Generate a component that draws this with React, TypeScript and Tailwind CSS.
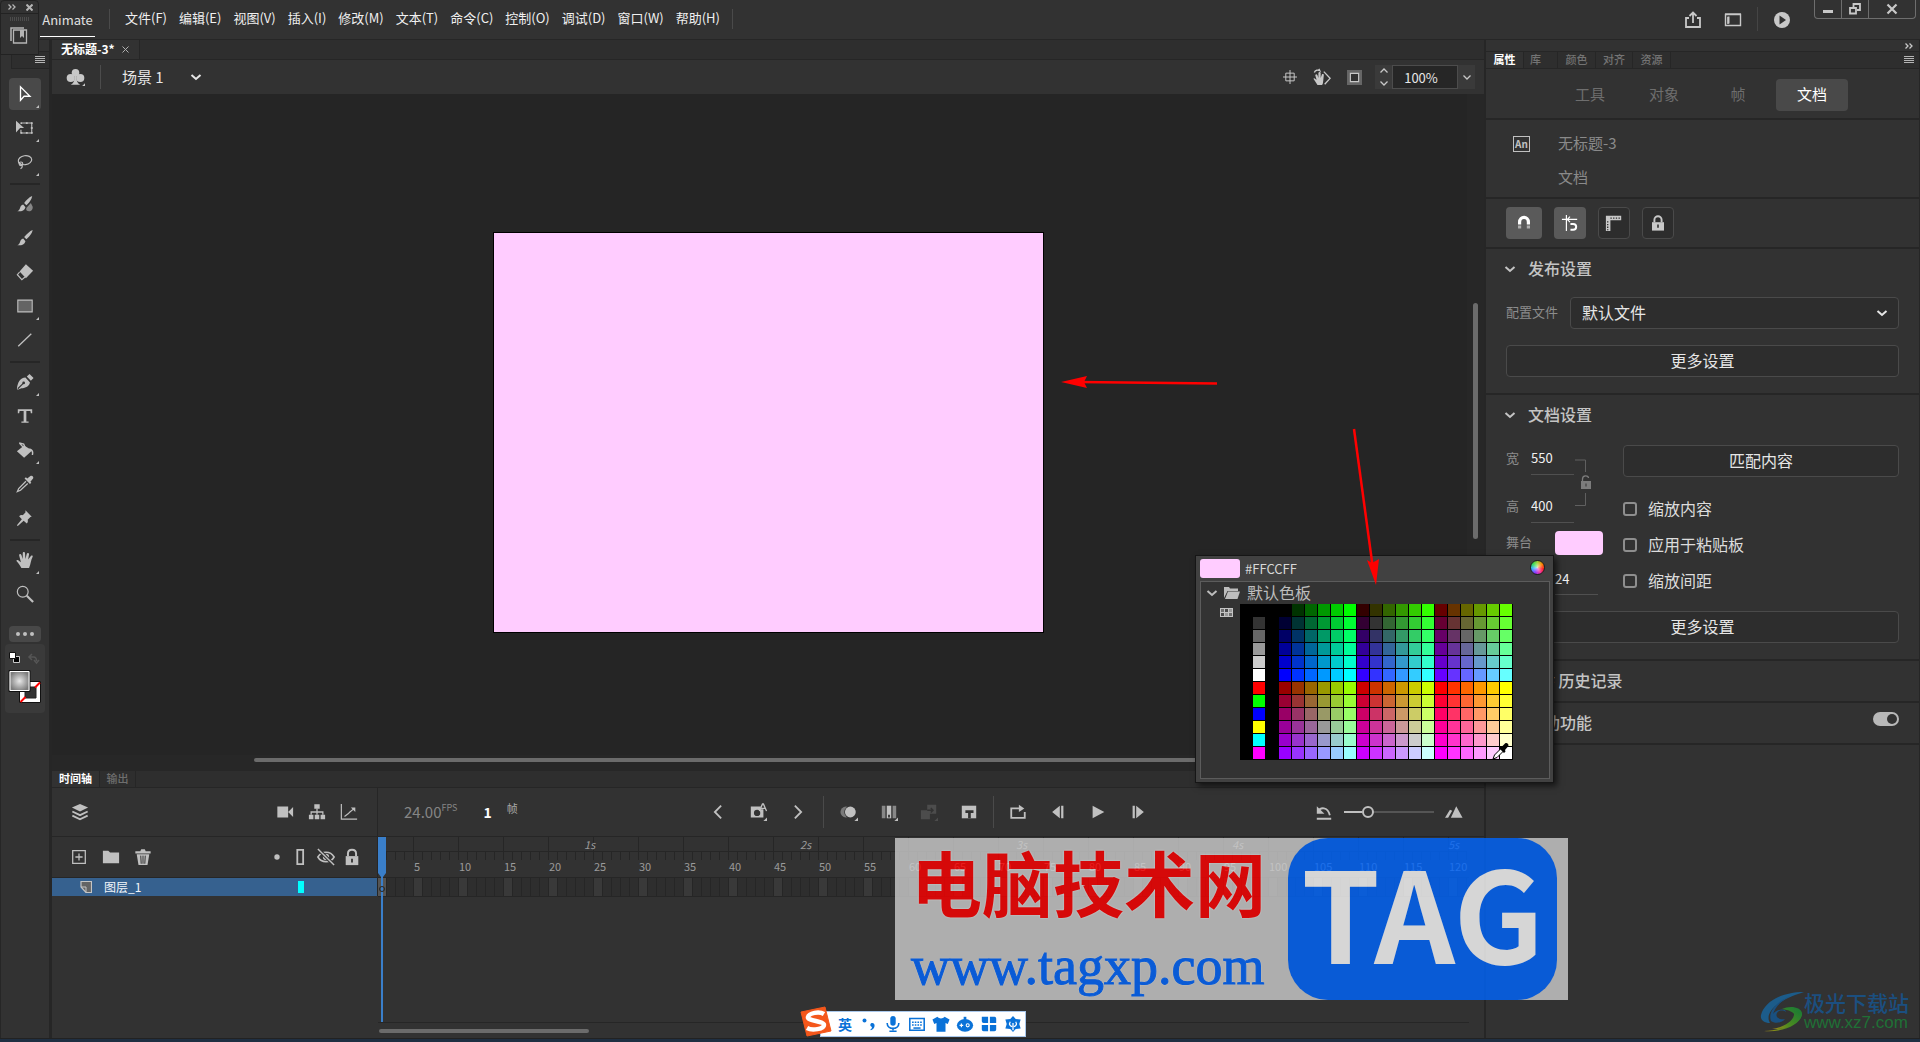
import React, { useState } from 'react'

type IconProps = {
  children: React.ReactNode
  className?: string
  box?: string
}

const Icon: React.FC<IconProps> = ({ children, className = 'w-5 h-5', box = '0 0 20 20' }) => (
  <svg viewBox={box} className={`${className} shrink-0`} fill="currentColor" aria-hidden="true">
    {children}
  </svg>
)

const stroke = { fill: 'none', stroke: 'currentColor' }

const Chevron: React.FC<{ className?: string }> = ({ className = 'w-3 h-3' }) => (
  <Icon box="0 0 12 12" className={className}>
    <path d="M1.500 4l4.500 4 4.500-4" {...stroke} strokeWidth="2" />
  </Icon>
)

const Burger: React.FC = () => (
  <Icon box="0 0 10 8" className="w-[10px] h-2">
    <path d="M0 .5h10M0 2.500h10M0 4.500h10M0 6.500h10" {...stroke} />
  </Icon>
)

const menus = ['文件(F)', '编辑(E)', '视图(V)', '插入(I)', '修改(M)', '文本(T)', '命令(C)', '控制(O)', '调试(D)', '窗口(W)', '帮助(H)']

const TopBar: React.FC = () => (
  <header className="flex h-10 shrink-0 items-start border-b border-[#262626] bg-[#323232] pl-10">
    <button className="mt-2 h-[29px] w-[55px] border-b border-white pb-1 text-[13px] text-[#e0e0e0]">Animate</button>
    <span className="mt-[9px] ml-[14px] h-5 w-px bg-[#4a4a4a]" />
    <nav className="flex gap-3 pt-[9px] pl-[15px] text-[13px] leading-[18px] whitespace-nowrap text-[#f0f0f0]">
      {menus.map((m) => (
        <button key={m}>{m}</button>
      ))}
    </nav>
    <span className="mt-[9px] ml-[12px] h-5 w-px bg-[#4a4a4a]" />
    <div className="ml-auto flex text-[#c8c8c8]">
      <button className="mt-2 flex h-6 w-10 items-center justify-center" aria-label="共享">
        <Icon>
          <path d="M6 8H3v9h14V8h-3M10 13V3M6.500 6L10 2.500 13.500 6" {...stroke} strokeWidth="1.800" />
        </Icon>
      </button>
      <button className="mt-2 flex h-6 w-10 items-center justify-center" aria-label="工作区">
        <Icon>
          <path d="M2.500 4.500h15v11h-15zM2 4h16M5 7v7" {...stroke} strokeWidth="1.400" />
          <path d="M4.500 6.500h2v7h-2z" />
        </Icon>
      </button>
      <span className="mx-1 mt-[7px] h-6 w-px bg-[#454545]" />
      <button className="mt-2 flex h-6 w-10 items-center justify-center" aria-label="测试影片">
        <Icon>
          <circle cx="10" cy="10" r="8" />
          <path d="M7.500 5.500l6.500 4.500-6.500 4.500z" fill="#323232" />
        </Icon>
      </button>
      <div className="mr-1 ml-3 flex h-[19px] rounded-b border border-t-0 border-[#6e6e6e]">
        <button className="flex w-[27px] items-center justify-center border-r border-[#6e6e6e]" aria-label="最小化">
          <Icon box="0 0 12 12" className="h-3 w-3"><path d="M1 7h10v3H1z" /></Icon>
        </button>
        <button className="flex w-[27px] items-center justify-center border-r border-[#6e6e6e]" aria-label="还原">
          <Icon box="0 0 12 12" className="h-3 w-3"><path d="M4.500 4V1h6.500v6H8M1 5h6v5.500H1z" {...stroke} strokeWidth="1.800" /></Icon>
        </button>
        <button className="flex w-[46px] items-center justify-center" aria-label="关闭">
          <Icon box="0 0 12 12" className="h-3 w-3"><path d="M1.500 1.500l9 9M10.500 1.500l-9 9" {...stroke} strokeWidth="2.200" /></Icon>
        </button>
      </div>
    </div>
  </header>
)

type Tool = { name: string; more?: boolean; art: React.ReactNode }

const toolGroups: Tool[][] = [
  [
    { name: '选择工具', more: true, art: <path d="M5 2v15l4-4.500h6.500z" {...stroke} strokeWidth="1.500" stroke="#fff" /> },
    {
      name: '任意变形工具',
      more: true,
      art: (
        <>
          <path d="M0 2l9 8H4.500L0 15z" />
          <path d="M7 4.500h10.500v11H5.500V12" {...stroke} strokeWidth="1.200" />
          <path d="M5 3.500h2v2H5zM11 3.500h2v2h-2zM16.500 3.500h2v2h-2zM16.500 9h2v2h-2zM16.500 14.500h2v2h-2zM11 14.500h2v2h-2zM5 14.500h2v2H5z" />
        </>
      ),
    },
    {
      name: '套索工具',
      more: true,
      art: (
        <g {...stroke} strokeWidth="1.300">
          <ellipse cx="10" cy="8" rx="7.500" ry="5" transform="rotate(-8 10 8)" />
          <circle cx="5.500" cy="12" r="2" />
          <path d="M3 10c0 3 4 2 4 4.500 0 1.500-1 2.500-2 3" />
        </g>
      ),
    },
  ],
  [
    {
      name: '流畅画笔工具',
      art: (
        <>
          <path d="M18 1c-3 1-7 5-9 8l2.500 2.500C14 9 17.500 5 18 1zM8 10.500c-2 .5-3 2-3.500 4-.5 1.500-1.500 3-3 3.500 4 .5 8-.5 9-4.500z" />
          <path d="M16.500 9l2 4c.5 3-1.500 5-4 5s-3.500-1-3-3.500z" opacity=".6" />
        </>
      ),
    },
    { name: '传统画笔工具', art: <path d="M18.500 1c-3 1-7 5-9.500 8l2.500 2.500C14 9 18 5 18.500 1zM8 10.500c-2 .5-3 2-3.500 4-.5 1.500-1.500 3-3 3.500 4 .5 8-.5 9-4.500z" /> },
    {
      name: '橡皮擦工具',
      art: (
        <>
          <path d="M11 1.500l8 7-8 8.500L4 9.500z" />
          <path d="M4 10L1.500 13l5 5.500 3.500-3" {...stroke} strokeWidth="1.300" />
        </>
      ),
    },
    { name: '矩形工具', more: true, art: <path d="M2 3.500h16v13H2z" fill="#646464" stroke="currentColor" strokeWidth="1.200" /> },
    { name: '线条工具', art: <path d="M2.500 17L17 3" {...stroke} strokeWidth="1.400" /> },
  ],
  [
    {
      name: '钢笔工具',
      more: true,
      art: (
        <>
          <path d="M10.500 5L15.500 10.500C14.500 15 11 16.500 6 17l-4 1.500L1 17.500C2 10 4.500 5.500 10.500 5zM12 4l3-3 4.500 4.500-3 3z" />
          <path d="M2 17.500l6-6" stroke="#323232" strokeWidth="1.200" />
          <circle cx="8.500" cy="11" r="1.500" fill="#323232" />
        </>
      ),
    },
    { name: '文本工具', art: <path d="M2 2.500h16v4.500h-1.500L16 4.500h-4.500v11.500H14v1.500H6V16h2.500V4.500H4L3.500 7H2z" /> },
    {
      name: '颜料桶工具',
      more: true,
      art: (
        <>
          <path d="M9 5l9 5.500L9 18.500l-8-7zM15 8c4 1 5 4 4 7.500h-1.500c.5-3 0-5-2.500-6z" />
          <path d="M4 2.500l6 6.500M3.500 2l5 1.500L10 7" {...stroke} strokeWidth="1.500" />
        </>
      ),
    },
    {
      name: '滴管工具',
      art: (
        <>
          <path d="M12.500 4l3.500-3c2-1 4 1 3 3l-3 3.500 1 1-1.500 1.500-6-6 1.500-1.500z" />
          <path d="M11 7l-8 8-1.500 3.500 3.500-1.500L13 9.500" {...stroke} strokeWidth="1.400" />
        </>
      ),
    },
    { name: '资源变形工具', art: <path d="M10.500 1.500l7 7-1.500.5-3 3c.5 2 0 3-1 4L8.500 13 2 19l-1-1 5.500-6.500L3.500 8c1-1 2.500-1.500 4-1l3-3z" /> },
  ],
  [
    {
      name: '手形工具',
      more: true,
      art: <path d="M6 19C4.500 16 3 13.500.5 11c0-1.500 2-1.500 3 0L5.500 12.500 3.500 5C3.500 3 5.500 3 6 4.500L7.500 9V2.500c0-2 2.500-2 2.500 0l.5 6.500L12 3c.5-1.500 2.500-1 2.500.5L13.500 9.500 16.500 5.500c1-1 2.500-.5 2 1-2 3.500-2 8-4 12.500z" />,
    },
    {
      name: '缩放工具',
      art: (
        <g {...stroke}>
          <circle cx="7.500" cy="7.500" r="6" strokeWidth="1.300" />
          <path d="M12 12l7 7" strokeWidth="2.400" />
        </g>
      ),
    },
  ],
]

const Toolbar: React.FC = () => {
  const [tool, setTool] = useState('选择工具')
  return (
    <aside className="w-[49px] shrink-0 border-l border-[#262626] bg-[#323232]">
      <div className="h-3 border-b border-[#262626]" />
      <div className="mb-[9px] ml-[10px] flex h-[17px] items-center justify-end border-b border-l border-[#262626] bg-[#2e2e2e] pr-1 text-[#b5b5b5]">
        <Burger />
      </div>
      {toolGroups.map((group, i) => (
        <div key={i}>
          {i > 0 && <div className="mx-auto mt-[5px] mb-[3px] h-[2px] w-[30px] bg-[#262626]" />}
          {group.map((t) => (
            <button
              key={t.name}
              aria-label={t.name}
              onClick={() => setTool(t.name)}
              className={`relative mx-auto mb-[2px] flex h-8 w-8 items-center justify-center rounded text-[#c0c0c0] ${tool === t.name ? 'bg-[#494949]' : ''}`}
            >
              <Icon className="h-[18px] w-[18px]">{t.art}</Icon>
              {t.more && (
                <Icon box="0 0 4 4" className="absolute right-[2px] bottom-[2px] h-[3px] w-[3px]">
                  <path d="M4 0v4H0z" />
                </Icon>
              )}
            </button>
          ))}
        </div>
      ))}
      <button aria-label="编辑工具栏" className="mx-auto mt-4 flex h-4 w-8 items-center justify-center gap-[3px] rounded bg-[#484848]">
        <span className="h-1 w-1 rounded-full bg-[#c0c0c0]" />
        <span className="h-1 w-1 rounded-full bg-[#c0c0c0]" />
        <span className="h-1 w-1 rounded-full bg-[#c0c0c0]" />
      </button>
      <div className="mx-auto mt-[2px] h-[69px] w-10 rounded bg-[#3a3a3a]">
        <svg viewBox="0 0 40 69" className="h-[69px] w-10" aria-hidden="true">
          <defs>
            <radialGradient id="fillball">
              <stop offset="0" stopColor="#e8e8e8" />
              <stop offset="1" stopColor="#7c7c7c" />
            </radialGradient>
          </defs>
          <path d="M8.500 12.500h6v6h-6z" fill="#000" stroke="#c8c8c8" />
          <path d="M4.500 8.500h6v6h-6z" fill="#fff" stroke="#111" />
          <path d="M27 10l-3 3 3 3M24.500 13h4c2 0 3 1 3 4M29 16l2.500 3 2.500-3" fill="none" stroke="#555" strokeWidth="1.500" />
          <path d="M14.500 37.500h21v21h-21z" fill="#fff" stroke="#111" />
          <path d="M20 43h11v11H20z" fill="#323232" stroke="#222" />
          <path d="M15.500 58l5-5M30 43.500l5-5" stroke="#f00" strokeWidth="2" />
          <path d="M4 26.500h21v21H4z" fill="url(#fillball)" stroke="#111" />
          <path d="M5 27.500h19v19H5z" fill="none" stroke="#fff" />
        </svg>
      </div>
    </aside>
  )
}

const SceneBar: React.FC = () => (
  <div className="flex h-[34px] shrink-0 items-center bg-[#323232] text-[#c8c8c8]">
    <button className="ml-[14px] flex w-5" aria-label="编辑元件">
      <Icon className="h-[19px] w-[19px]">
        <circle cx="10" cy="5" r="4" />
        <circle cx="5" cy="10.500" r="4.300" />
        <circle cx="15" cy="10.500" r="4.300" />
        <path d="M9 8h2c0 5 .5 8 4 9.500H5C8.500 16 9 13 9 8zM20 16v3h-3z" />
      </Icon>
    </button>
    <span className="ml-[14px] h-6 w-px bg-[#4c4c4c]" />
    <button className="ml-[21px] flex items-center text-[15px] leading-5 text-[#e6e6e6]">
      场景 1
      <span className="ml-[26px]"><Chevron /></span>
    </button>
    <div className="mr-[9px] ml-auto flex items-center">
      <button className="flex w-8 justify-center" aria-label="舞台居中">
        <Icon className="h-[14px] w-[14px]"><path d="M10 0v20M0 10h20M4 4.500h12v11H4z" {...stroke} strokeWidth="1.400" /></Icon>
      </button>
      <button className="flex w-8 justify-center" aria-label="旋转工具">
        <Icon className="h-[18px] w-[18px]">
          <path d="M5 19L.5 12c0-1 1.500-1 2.500.5L4 13 2.500 8c.5-1.500 2-1 2.500 0l1 3V5.500c.5-1.500 2.500-1 2.500 0V11l1.500-4c1-1 2.500 0 2 1l-.5 5c-.5 3 0 4-1.500 6z" />
          <path d="M1.500 5c1-3 4-3 6-2L6.500 1M12 4l7 7.500-6 6.500" {...stroke} strokeWidth="1.500" />
        </Icon>
      </button>
      <button className="flex w-8 justify-center" aria-label="剪切掉舞台范围以外的内容">
        <Icon className="h-[15px] w-[15px]">
          <path d="M0 0h20v20H0z" opacity=".35" />
          <path d="M4.500 4.500h11v11h-11z" fill="#323232" stroke="currentColor" strokeWidth="1.500" />
        </Icon>
      </button>
      <div className="ml-[5px] flex h-6 w-[17px] flex-col items-center justify-between bg-[#3a3a3a] py-[3px]">
        <Icon box="0 0 8 5" className="h-[5px] w-2"><path d="M.5 4.500L4 1l3.500 3.500" {...stroke} strokeWidth="1.300" /></Icon>
        <Icon box="0 0 8 5" className="h-[5px] w-2"><path d="M.5 .5L4 4 7.500.5" {...stroke} strokeWidth="1.300" /></Icon>
      </div>
      <input aria-label="缩放比例" defaultValue="100%" className="h-6 w-[66px] border border-[#4c4c4c] bg-[#262626] pr-2 text-center text-[13px] text-[#e6e6e6]" />
      <button aria-label="缩放列表" className="flex h-6 w-[17px] items-center justify-center bg-[#3a3a3a]">
        <Icon box="0 0 8 5" className="h-[5px] w-2"><path d="M.5 .5L4 4 7.500.5" {...stroke} strokeWidth="1.300" /></Icon>
      </button>
    </div>
  </div>
)

const CanvasArea: React.FC = () => (
  <div className="relative flex flex-1 items-center justify-center bg-[#252525]">
    <div className="h-[401px] w-[551px] border border-black bg-[#ffccff]" />
    <div className="absolute top-0 right-0 h-full w-[17px] bg-[#272727]">
      <div className="mt-[209px] ml-[6px] h-[236px] w-[5px] rounded-full bg-[#6b6b6b]" />
    </div>
    <div className="absolute bottom-0 left-0 h-4 w-full bg-[#272727]">
      <div className="mt-[3px] ml-[202px] h-1 w-[1020px] rounded-full bg-[#6b6b6b]" />
    </div>
  </div>
)

const IconButton: React.FC<{ label: string; width?: string; children: React.ReactNode }> = ({ label, width = 'w-8', children }) => (
  <button aria-label={label} className={`flex ${width} shrink-0 justify-center`}>
    <Icon className="h-[18px] w-[18px]">{children}</Icon>
  </button>
)

const frames = Array.from({ length: 121 }, (_, i) => i + 1)
const corner = <path d="M20 16v4h-4z" />

const Timeline: React.FC = () => (
  <section className="h-[267px] shrink-0 bg-[#323232] text-[#c0c0c0]">
    <div className="flex h-[17px] border-b border-[#262626] bg-[#2e2e2e] text-[11px] leading-[14px] font-bold">
      <button className="w-12 border-r border-[#262626] bg-[#323232] pb-[2px] text-white">时间轴</button>
      <button className="w-9 border-r border-[#262626] pb-[2px] font-medium text-[#6e6e6e]">输出</button>
    </div>
    <div className="flex h-[49px] items-center border-b border-[#262626]">
      <div className="flex h-full w-[326px] shrink-0 items-center border-r border-[#262626] pr-3 pl-3">
        <IconButton label="图层深度">
          <path d="M10 1l9 4-9 4.500L1 5z" />
          <path d="M1.500 9.500L10 13.500l8.500-4M1.500 14L10 18l8.500-4" {...stroke} strokeWidth="2" />
        </IconButton>
        <span className="flex-1" />
        <IconButton label="摄像头"><path d="M1.500 4h12v12h-12zM13.500 10L19 4.500v11z" /></IconButton>
        <IconButton label="父级视图">
          <path d="M7 1.500h6v5H7zM1 13h5v5H1zM7.500 13h5v5h-5zM14 13h5v5h-5z" />
          <path d="M10 6v7M3.500 13v-3h13v3" {...stroke} strokeWidth="1.400" />
        </IconButton>
        <IconButton label="图表">
          <path d="M1.500 1v17H19M5 15l4-3 2-2 5-4" {...stroke} strokeWidth="1.300" />
          <path d="M12 5h5v5z" />
        </IconButton>
      </div>
      <div className="flex w-[320px] shrink-0 pl-[26px]">
        <span className="text-[15px] leading-5 text-[#858585]">24.00</span>
        <span className="text-[9px] leading-3 text-[#858585]">FPS</span>
        <span className="ml-[26px] text-[14px] leading-5 font-bold text-white">1</span>
        <span className="ml-[15px] text-[11px] leading-3 text-[#a8a8a8]">帧</span>
      </div>
      <IconButton label="上一关键帧" width="w-10"><path d="M13.500 3L6.500 10l7 7" {...stroke} strokeWidth="2" /></IconButton>
      <IconButton label="插入关键帧" width="w-10">
        <path d="M2 4h11v3h3v9H2z" />
        <circle cx="9" cy="11" r="3.500" fill="#323232" />
        <path d="M11.500 9l3.500-8h1l3.500 8M13.500 6h4" {...stroke} strokeWidth="1.500" />
        {corner}
      </IconButton>
      <IconButton label="下一关键帧" width="w-10"><path d="M6.500 3l7 7-7 7" {...stroke} strokeWidth="2" /></IconButton>
      <span className="mx-[5px] h-8 w-px bg-[#4a4a4a]" />
      <IconButton label="绘图纸外观" width="w-10">
        <circle cx="6.500" cy="10" r="6" opacity=".5" />
        <circle cx="11.500" cy="10" r="6.800" fill="#323232" />
        <circle cx="11.500" cy="10" r="6" />
        {corner}
      </IconButton>
      <IconButton label="编辑多个帧" width="w-10">
        <path d="M2 3h4v14H2zM14 3h4v14h-4z" opacity=".6" />
        <path d="M7.500 3h5v14h-5z" />
        <path d="M9 13h2v3H9z" fill="#323232" />
        {corner}
      </IconButton>
      <IconButton label="创建补间" width="w-10">
        <path d="M8 2h10v10H8zM1 8h10v10H1z" fill="#4c4c4c" />
        <path d="M8 8h6M12 5.500L14.500 8 12 10.500" fill="none" stroke="#323232" strokeWidth="1.500" />
        <path d="M20 16v4h-4z" fill="#4c4c4c" />
      </IconButton>
      <IconButton label="粘贴帧" width="w-10">
        <path d="M2 3h16v14H2z" />
        <path d="M6 8h9v3h-3v6H9v-6H6z" fill="#323232" />
      </IconButton>
      <span className="mx-1 h-8 w-px bg-[#4a4a4a]" />
      <IconButton label="循环" width="w-10">
        <path d="M9 6H2.500v10.500h15V10M8 6h5" {...stroke} strokeWidth="2" />
        <path d="M11 2l6 4-6 4z" />
      </IconButton>
      <IconButton label="后退一帧" width="w-10"><path d="M12 3v14L3.500 10zM13.500 3H16v14h-2.500z" /></IconButton>
      <IconButton label="播放" width="w-10"><path d="M4 3l13 7-13 7z" /></IconButton>
      <IconButton label="前进一帧" width="w-10"><path d="M4 3h2.500v14H4zM8 3v14l8.500-7z" /></IconButton>
      <div className="mr-[14px] ml-auto flex items-center">
        <IconButton label="重置时间轴缩放">
          <path d="M2 17.500h16M3 10c3-6 11-6 13.500 3.500" {...stroke} strokeWidth="2" />
          <path d="M2 3.500v8.500h8.500z" />
        </IconButton>
        <input
          type="range"
          aria-label="时间轴缩放"
          defaultValue="23"
          className="mx-1 h-[2px] w-[90px] appearance-none bg-linear-to-r from-[#c0c0c0] from-20% to-[#555] to-20% [&::-webkit-slider-thumb]:h-3 [&::-webkit-slider-thumb]:w-3 [&::-webkit-slider-thumb]:appearance-none [&::-webkit-slider-thumb]:rounded-full [&::-webkit-slider-thumb]:border-2 [&::-webkit-slider-thumb]:border-[#c0c0c0] [&::-webkit-slider-thumb]:bg-[#323232]"
        />
        <IconButton label="放大"><path d="M6.500 16.500l6-13 7 13zM0 16.500l5.500-9 2.500 1-4.500 8z" /></IconButton>
      </div>
    </div>
    <div className="flex h-[201px]">
      <div className="w-[326px] shrink-0">
        <div className="flex h-[41px] items-center border-r border-b border-[#262626] pr-3 pl-[11px]">
          <IconButton label="新建图层"><path d="M3 3h14v14H3zM10 6v8M6 10h8" {...stroke} strokeWidth="1.400" /></IconButton>
          <IconButton label="新建文件夹"><path d="M1 3h6l2 2h10v12H1z" /></IconButton>
          <IconButton label="删除">
            <path d="M1.500 3.500H7l1-2h4l1 2h5.500V6h-17zM3 7h14l-2 12H5z" />
            <path d="M7.500 8.500l.5 9M10 8.500v9M12.500 8.500l-.5 9" stroke="#323232" strokeWidth="1.100" />
          </IconButton>
          <span className="flex-1" />
          <IconButton label="突出显示图层" width="w-[20px]"><circle cx="10" cy="10" r="3" /></IconButton>
          <IconButton label="显示轮廓" width="w-[26px]"><path d="M7 2h6.500v16H7z" {...stroke} strokeWidth="2" /></IconButton>
          <IconButton label="隐藏图层" width="w-[26px]">
            <path d="M1 10c4-7 14-7 18 0-4 7-14 7-18 0z" {...stroke} strokeWidth="1.800" />
            <circle cx="10" cy="10" r="3.500" />
            <path d="M1 1l17 17" stroke="#323232" strokeWidth="4" />
            <path d="M1 1l18 18" {...stroke} strokeWidth="1.600" />
          </IconButton>
          <IconButton label="锁定图层" width="w-[26px]">
            <path d="M3 9h14v10H3z" />
            <path d="M5.500 9V6c0-5.500 9-5.500 9 0v3" {...stroke} strokeWidth="2.200" />
            <path d="M9 12h2v4H9z" fill="#323232" />
          </IconButton>
        </div>
        <div className="flex h-[18px] items-center border-r border-[#262626] bg-[#36618f] pl-[28px] text-[12px] text-[#f2f6fa]">
          <Icon box="0 0 12 12" className="h-3 w-3">
            <path d="M1 .5h10.500v11H6L1 6z" fill="#646464" stroke="#c4c4c4" strokeWidth="1.200" />
            <path d="M1 6h5v5.500" {...stroke} stroke="#c4c4c4" />
          </Icon>
          <span className="ml-3">图层_1</span>
          <span className="mr-[73px] ml-auto h-3 w-[6px] bg-[#00ffff]" />
        </div>
      </div>
      <div className="relative mr-[15px] min-w-0 flex-1 overflow-hidden">
        <div className="flex h-[41px] border-b border-[#262626] text-[11px] text-[#9a9a9a]">
          {frames.map((n) => (
            <div key={n} className="relative w-[9px] shrink-0">
              <div className={`h-[15px] border-b border-[#262626] ${n % 5 === 4 ? 'border-r' : ''}`} />
              <div className="h-2 border-r border-[#262626]" />
              {n % 5 === 0 && <span className="absolute top-[21px] left-0 leading-4">{n}</span>}
              {n % 24 === 0 && <span className="absolute top-0 left-[-1px] leading-[14px] italic">{n / 24}s</span>}
            </div>
          ))}
        </div>
        <div className="flex h-[19px] border-b border-[#262626]">
          {frames.map((n) => (
            <div
              key={n}
              className={`w-[9px] shrink-0 border-r border-[#262626] ${n === 1 ? 'bg-[#555555]' : n % 5 === 0 ? 'bg-[#393939]' : 'bg-[#2e2e2e]'}`}
            />
          ))}
        </div>
        <svg viewBox="0 0 9 185" className="absolute top-0 left-0 h-[185px] w-[9px]" aria-hidden="true">
          <path d="M0 0h8v36l-3 4v145H3V40l-3-4z" fill="#3a7fca" />
          <circle cx="4" cy="52" r="2.500" fill="none" stroke="#262626" />
        </svg>
        <div className="absolute top-[185px] left-0 h-4 w-full border-t border-[#262626]">
          <div className="mt-[6px] ml-px h-1 w-[210px] rounded-full bg-[#6b6b6b]" />
        </div>
      </div>
    </div>
  </section>
)

const Section: React.FC<{ title: React.ReactNode; extra?: React.ReactNode; children?: React.ReactNode }> = ({ title, extra, children }) => (
  <section className="border-b-2 border-[#262626]">
    <h2 className="flex h-10 items-center pr-5 pl-[18px] font-medium text-[#c4c4c4]">
      <Chevron />
      <span className="ml-3 pb-[2px] text-[16px]">{title}</span>
      {extra}
    </h2>
    {children}
  </section>
)

const wideButton = 'h-8 w-full rounded border border-[#4a4a4a] bg-[#2d2d2d] pb-[2px] text-[16px] leading-6 text-[#e6e6e6]'

const SizeField: React.FC<{ id: string; label: string; value: string }> = ({ id, label, value }) => (
  <div className="flex h-12 items-start">
    <label htmlFor={id} className="w-[25px] text-[13px] leading-[26px] text-[#8c8c8c]">{label}</label>
    <input id={id} defaultValue={value} className="h-[30px] w-[43px] border-b border-[#505050] pb-1 text-[13px] text-[#f0f0f0]" />
  </div>
)

const Check: React.FC<{ label: string }> = ({ label }) => (
  <label className="flex h-9 items-center gap-[11px] text-[16px] text-[#dcdcdc]">
    <input type="checkbox" className="h-[14px] w-[14px] appearance-none rounded-[3px] border-2 border-[#8e8e8e] checked:bg-[#8e8e8e]" />
    <span className="pb-[2px]">{label}</span>
  </label>
)

const Properties: React.FC = () => {
  const [tab, setTab] = useState('文档')
  return (
    <aside className="w-[434px] shrink-0 border-r border-[#262626] bg-[#323232] text-[#c8c8c8]">
      <div className="flex h-3 items-center justify-end border-b border-[#262626] pr-[6px]">
        <Icon box="0 0 8 6" className="h-[6px] w-2"><path d="M.5.500L3 3 .5 5.500M4.500.5L7 3 4.500 5.500" {...stroke} strokeWidth="1.300" /></Icon>
      </div>
      <div className="flex h-[17px] items-stretch border-b border-[#262626] bg-[#2e2e2e] text-[11px] leading-[14px] font-medium text-[#747474]">
        <button className="w-[38px] border-r border-[#262626] bg-[#323232] pb-[2px] font-bold text-white">属性</button>
        <button className="w-[34px] border-r border-[#262626] pr-[10px] pb-[2px]">库</button>
        <button className="w-[38px] border-r border-[#262626] pb-[2px]">颜色</button>
        <button className="w-[37px] border-r border-[#262626] pb-[2px]">对齐</button>
        <button className="w-[38px] border-r border-[#262626] pb-[2px]">资源</button>
        <span className="mt-1 mr-[5px] ml-auto text-[#b5b5b5]"><Burger /></span>
      </div>
      <div className="flex h-[51px] items-center justify-end gap-[2px] border-b-2 border-[#262626] pt-[3px] pr-[71px]">
        {['工具', '对象', '帧', '文档'].map((t) => (
          <button
            key={t}
            onClick={() => setTab(t)}
            className={`h-8 w-[72px] rounded pb-[2px] text-[15px] ${tab === t ? 'bg-[#494949] text-white' : 'text-[#6e6e6e]'}`}
          >
            {t}
          </button>
        ))}
      </div>
      <div className="flex h-[79px] border-b-2 border-[#262626] pt-[6px] text-[15px] leading-[34px] text-[#8a8a8a]">
        <span className="mt-[10px] ml-[27px] flex h-4 w-[17px] items-center justify-center border border-[#c0c0c0] text-[10px] leading-3 font-bold text-[#c0c0c0]">An</span>
        <div className="ml-[28px]">
          <p>无标题-3</p>
          <p>文档</p>
        </div>
      </div>
      <div className="flex h-[50px] items-center gap-3 border-b-2 border-[#262626] pl-5">
        <button aria-label="贴紧至对象" className="flex h-8 w-9 items-center justify-center rounded bg-[#5a5a5a] text-white">
          <Icon className="h-4 w-4">
            <path d="M4.500 12V9c0-8 11-8 11 0v3" {...stroke} strokeWidth="4" />
            <path d="M2.500 13h4v4h-4zM13.500 13h4v4h-4z" opacity=".5" />
          </Icon>
        </button>
        <button aria-label="贴紧对齐" className="flex h-8 w-8 items-center justify-center rounded bg-[#5a5a5a] text-white">
          <Icon className="h-[18px] w-[18px]">
            <path d="M6 1v18M1 6h17M10 3L7 6l3 3" {...stroke} strokeWidth="1.300" />
            <path d="M10.500 11h3c4.500 0 4.500 6.500 0 6.500h-3" {...stroke} strokeWidth="2.200" />
          </Icon>
        </button>
        <button aria-label="标尺" className="flex h-8 w-8 items-center justify-center rounded border border-[#4a4a4a] bg-[#2d2d2d]">
          <Icon className="h-[18px] w-[18px]">
            <path d="M1 2h17v5H6v12H1z" />
            <path d="M6 4.500h11M3 8v10" {...stroke} stroke="#2d2d2d" strokeWidth="1.500" strokeDasharray="1.500 1.500" />
          </Icon>
        </button>
        <button aria-label="锁定辅助线" className="flex h-8 w-8 items-center justify-center rounded border border-[#4a4a4a] bg-[#2d2d2d]">
          <Icon className="h-4 w-4">
            <path d="M2.500 9h15v10.500h-15z" />
            <path d="M5.500 9V6c0-6 9-6 9 0v3" {...stroke} strokeWidth="2.400" />
            <path d="M9 12h2v4H9z" fill="#2d2d2d" />
          </Icon>
        </button>
      </div>
      <Section title="发布设置">
        <div className="px-5 pt-2 pb-4">
          <div className="mb-4 flex items-center">
            <label htmlFor="profile" className="w-16 pb-[2px] text-[13px] text-[#8c8c8c]">配置文件</label>
            <div className="relative flex-1">
              <select id="profile" className="h-8 w-full appearance-none rounded border border-[#4a4a4a] bg-[#2d2d2d] pb-[2px] pl-[11px] text-[16px] text-[#e6e6e6]">
                <option>默认文件</option>
              </select>
              <span className="pointer-events-none absolute top-[10px] right-[11px] text-[#e6e6e6]"><Chevron /></span>
            </div>
          </div>
          <button className={wideButton}>更多设置</button>
        </div>
      </Section>
      <Section title="文档设置">
        <div className="px-5 pt-[10px] pb-4">
          <div className="flex">
            <div className="relative w-[117px] shrink-0">
              <SizeField id="doc-width" label="宽" value="550" />
              <SizeField id="doc-height" label="高" value="400" />
              <svg viewBox="0 0 18 48" className="absolute top-[14px] left-[69px] h-12 w-[18px] text-[#7c7c7c]" aria-hidden="true">
                <path d="M0 1h10.500v12M0 46.500h10.500V34" fill="none" stroke="#606060" />
                <path d="M6 22h10v8H6z" fill="currentColor" />
                <path d="M7.500 22v-2c0-4 6-4 6-1" fill="none" stroke="currentColor" strokeWidth="1.300" />
                <path d="M10.500 24.500h1v3h-1z" fill="#323232" />
              </svg>
              <div className="-mt-[10px] flex h-[24px] items-center">
                <label htmlFor="stage-color" className="w-[49px] pb-[2px] text-[13px] text-[#8c8c8c]">舞台</label>
                <button id="stage-color" aria-label="舞台颜色" className="h-6 w-12 rounded bg-[#ffccff]" />
              </div>
              <div className="mt-2 flex items-start">
                <label htmlFor="fps" className="w-[49px] text-[13px] leading-[30px] text-[#8c8c8c]">FPS</label>
                <input id="fps" defaultValue="24" className="h-8 w-[43px] border-b border-[#505050] text-[13px] text-[#f0f0f0]" />
              </div>
            </div>
            <div className="flex-1">
              <button className={wideButton}>匹配内容</button>
              <div className="pt-[14px]">
                <Check label="缩放内容" />
                <Check label="应用于粘贴板" />
                <Check label="缩放间距" />
              </div>
            </div>
          </div>
          <button className={`mt-[12px] ${wideButton}`}>更多设置</button>
        </div>
      </Section>
      <Section
        title={
          <>
            <span className="text-[13px]">SWF</span> 历史记录
          </>
        }
      />
      <Section
        title="辅助功能"
        extra={
          <input
            type="checkbox"
            role="switch"
            aria-label="辅助功能"
            defaultChecked
            className="mb-2 ml-auto flex h-[14px] w-[26px] appearance-none items-center rounded-full bg-[#b8b8b8] px-[2px] before:h-[10px] before:w-[10px] before:rounded-full before:bg-[#323232] checked:justify-end"
          />
        }
      />
    </aside>
  )
}

const steps = ['00', '33', '66', '99', 'CC', 'FF']
const basics = ['#000000', '#333333', '#666666', '#999999', '#CCCCCC', '#FFFFFF', '#FF0000', '#00FF00', '#0000FF', '#FFFF00', '#00FFFF', '#FF00FF']

// web-safe cube: three red levels side by side, the upper three below them
const swatchAt = (row: number, col: number) => {
  if (col === 0 || col === 2) return '#000000'
  if (col === 1) return basics[row]
  const c = col - 3
  const red = steps[Math.floor(c / 6) + (row < 6 ? 0 : 3)]
  return `#${red}${steps[c % 6]}${steps[row % 6]}`
}

const ColorPopup: React.FC = () => {
  const [color, setColor] = useState('#FFCCFF')
  return (
    <div className="absolute top-[555px] right-[366px] flex h-[228px] w-[359px] flex-col border border-[#161616] bg-[#414141] p-[3px] pl-1 text-[#bdbdbd] shadow-[3px_3px_6px_rgba(0,0,0,0.6)]">
      <div className="flex h-[22px] shrink-0 items-start">
        <span className="h-[19px] w-10 rounded-[3px]" style={{ backgroundColor: color }} />
        <span className="ml-[5px] text-[13px] leading-5 text-[#d8d8d8]">{color}</span>
        <button
          aria-label="颜色选择器"
          className="mt-px mr-[5px] ml-auto h-[15px] w-[15px] rounded-full border border-[#1c1c1c] bg-[radial-gradient(circle,#ffffffaa,#ffffff00_60%),conic-gradient(#9c3,#f80,#f22,#e3a,#83f,#3af,#3d5,#9c3)]"
        />
      </div>
      <div className="flex-1 border border-[#5c5c5c] bg-[#333333]">
        <div className="flex h-[22px] items-center pl-[5px] text-[16px]">
          <Chevron />
          <Icon box="0 0 16 12" className="ml-[6px] h-3 w-4">
            <path d="M0 11V0h5l1 1.500h8V4H3.500z" />
            <path d="M4 4.500h12L13.500 12H1z" />
          </Icon>
          <span className="ml-[7px] pb-[2px]">默认色板</span>
        </div>
        <div className="flex pl-[19px]">
          <svg viewBox="0 0 13 9" className="mt-1 h-[9px] w-[13px] shrink-0" shapeRendering="crispEdges" aria-hidden="true">
            <path d="M0 0h13v9H0z" fill="#c4c4c4" />
            <path d="M1 1h3v3H1zM9 5h3v3H9z" fill="#707070" />
            <path d="M5 1h3v3H5zM1 5h3v3H1z" fill="#4c4c4c" />
            <path d="M9 1h3v3H9zM5 5h3v3H5z" fill="#999" />
          </svg>
          <div className="ml-[7px] grid grid-cols-[repeat(21,13px)] bg-black">
            {basics.map((_, row) =>
              Array.from({ length: 21 }, (_, col) => (
                <button
                  key={`${row}-${col}`}
                  aria-label={swatchAt(row, col)}
                  onClick={() => setColor(swatchAt(row, col))}
                  className="h-[13px] w-[13px] border-r border-b border-black"
                  style={{ backgroundColor: swatchAt(row, col) }}
                />
              )),
            )}
          </div>
        </div>
      </div>
      <svg viewBox="0 0 17 17" className="absolute right-[44px] bottom-[22px] h-[17px] w-[17px]" aria-hidden="true">
        <path d="M1 16l1.500-4L9 5.500 11.500 8 5 14.500z" fill="#fff" stroke="#000" />
        <path d="M8 3l2 .5L13 .5c2-1.500 4.500 1 3 3L13 7l.5 1.500L12 10 7 5z" fill="#000" />
      </svg>
    </div>
  )
}

// small docked panel hanging over the top left corner
const MiniPanel: React.FC = () => (
  <div className="absolute top-0 left-0 h-[55px] w-[39px] rounded-t border border-[#222] bg-[#323232] text-[#b5b5b5]">
    <div className="flex h-[13px] items-center justify-between border-b border-[#222] pr-[5px] pl-[7px]">
      <Icon box="0 0 8 6" className="h-[6px] w-2"><path d="M.5.500L3 3 .5 5.500M4.500.5L7 3 4.500 5.500" {...stroke} strokeWidth="1.300" /></Icon>
      <Icon box="0 0 7 7" className="h-[7px] w-[7px]"><path d="M.5.500l6 6M6.500.5l-6 6" {...stroke} strokeWidth="2" /></Icon>
    </div>
    <Icon box="0 0 20 4" className="mx-auto mt-[3px] h-1 w-5 text-[#4c4c4c]">
      <path d="M.5 0v4M2.500 0v4M4.500 0v4M6.500 0v4M8.500 0v4M10.500 0v4M12.500 0v4M14.500 0v4M16.500 0v4M18.500 0v4" {...stroke} />
    </Icon>
    <Icon box="0 0 18 18" className="ml-[9px] mt-[6px] h-[18px] w-[18px]">
      <path d="M3.500 3h13v13h-13z" {...stroke} strokeWidth="1.300" />
      <path d="M14 1H1v13" {...stroke} strokeWidth="1.500" />
      <path d="M10 3h4v8l-2-2-2 2z" />
    </Icon>
  </div>
)

const TagBanner: React.FC = () => (
  <div className="absolute bottom-[42px] left-[895px] flex h-[162px] w-[673px] bg-[#cdcdcd] opacity-80">
    <div className="w-[393px] pl-4">
      <div className="pt-1 text-[71px] leading-[76px] font-bold whitespace-nowrap text-[#ff0000] [text-shadow:0_0_2px_#fff]">电脑技术网</div>
      <div className="pt-1 font-['Liberation_Serif',serif] text-[54px] leading-[88px] whitespace-nowrap text-[#0066ff] [-webkit-text-stroke:1px_#0066ff] [text-shadow:0_0_2px_#fff]">www.tagxp.com</div>
    </div>
    <div className="flex w-[269px] items-center justify-center rounded-[40px] bg-[#0066ff] pb-5 text-[126px] leading-[126px] font-bold text-white">TAG</div>
  </div>
)

const InputMethodBar: React.FC = () => (
  <div className="absolute bottom-[5px] left-[800px] flex h-[31px] items-end text-[#0a72d8]">
    <svg viewBox="0 0 32 31" className="relative z-10 h-[31px] w-8" aria-hidden="true">
      <path d="M1 6L25 1l6 24-24 5z" fill="#f4571b" stroke="#f4571b" strokeLinejoin="round" />
      <path d="M24 8c-5-3-15-1-16 3s16 4 16 8-12 6-17 3" fill="none" stroke="#fff" strokeWidth="4.500" />
    </svg>
    <div className="-ml-3 flex h-[26px] w-[206px] items-center border border-[#a9c8ec] bg-white pl-[12px]">
      <span className="flex w-6 justify-center text-[14px] leading-6 font-bold">英</span>
      <IconButton label="中英文标点" width="w-6"><circle cx="5" cy="6" r="2.200" /><path d="M13 9c4-1 5 6-1 8l-.5-1c2-1 2-2 1.500-3-2 0-2-3.500 0-4z" /></IconButton>
      <IconButton label="语音" width="w-6">
        <rect x="7" y="1" width="6" height="11" rx="3" />
        <path d="M3.500 9c0 8 13 8 13 0M10 14v3M6 18h8" {...stroke} strokeWidth="1.800" />
      </IconButton>
      <IconButton label="软键盘" width="w-6">
        <path d="M2 4h16v13H2z" {...stroke} strokeWidth="1.700" />
        <path d="M4.500 8h11M4.500 11h11" {...stroke} strokeWidth="1.700" strokeDasharray="1.800 1.200" />
        <path d="M6 14.500h8" {...stroke} strokeWidth="1.700" />
      </IconButton>
      <IconButton label="皮肤" width="w-6"><path d="M6 2c2 2.500 6 2.500 8 0l5.500 3-2 5L15 9v9.500H5V9l-2.500 1-2-5z" /></IconButton>
      <IconButton label="智能助手" width="w-6">
        <ellipse cx="10" cy="11.500" rx="9" ry="7" />
        <path d="M8.500 2h3v4h-3z" />
        <path d="M4 11.500h4M6 9.500v4" stroke="#fff" strokeWidth="1.300" />
        <circle cx="13" cy="11.500" r="1.700" fill="none" stroke="#fff" strokeWidth="1.200" />
      </IconButton>
      <IconButton label="工具箱" width="w-6"><path d="M2 2h7v7H4a2 2 0 01-2-2zM11 2h5a2 2 0 012 2v5h-7zM2 11h7v7H4a2 2 0 01-2-2zM11 11h7v5a2 2 0 01-2 2h-5z" /></IconButton>
      <IconButton label="设置" width="w-6">
        <path d="M10 1l3 3.500 5.500.5-1.500 5 1.500 5-5.500.500L10 19l-3-3.500-5.500-.5L3 10 1.500 5 7 4.500z" />
        <path d="M7 7.500c-2 3 0 5 2 5.500M13 7.500c2 3 0 5-2 5.500M10 9v8" stroke="#fff" strokeWidth="1.400" fill="none" />
      </IconButton>
    </div>
  </div>
)

const SiteMark: React.FC = () => (
  <div className="pointer-events-none absolute right-[11px] bottom-[8px] flex items-center">
    <svg viewBox="0 0 44 42" className="h-[42px] w-11" aria-hidden="true">
      <defs>
        <linearGradient id="leaf" x1="1" y1="0" x2="0" y2="1">
          <stop offset="0" stopColor="#177a35" />
          <stop offset=".6" stopColor="#4b8a20" />
          <stop offset="1" stopColor="#a38a18" />
        </linearGradient>
      </defs>
      <path d="M44 1C20 1 4 12 1 24c-1 5 3 8 9 8-5-8 2-21 34-31z" fill="#1c5c8a" />
      <path d="M30 5C14 12 8 22 11 30c4 3 11 2 14-2-6 1-10-2-8-6 2-3 6-3 9-1 0-4-10-3-13 2 2-7 8-13 17-18z" fill="#195080" />
      <path d="M22 18c8-4 19-2 20 4 1 9-16 20-38 18 17 0 32-8 31-15-1-4-6-6-13-7z" fill="url(#leaf)" />
      <path d="M33 19c5 8-7 17-21 19 14 1 30-6 30-16z" fill="url(#leaf)" />
    </svg>
    <div className="pb-[2px] whitespace-nowrap">
      <div className="text-[21px] leading-6 font-medium text-[#1b4f80]">极光下载站</div>
      <div className="font-['Liberation_Sans',sans-serif] text-[17px] leading-[18px] text-[#1f7036]">www.xz7.com</div>
    </div>
  </div>
)

const Arrows: React.FC = () => (
  <>
    <svg viewBox="0 0 160 16" className="pointer-events-none absolute top-[375px] left-[1060px] h-4 w-40" aria-hidden="true">
      <path d="M18 7l139 1.500" stroke="#f00" strokeWidth="2.500" />
      <path d="M1 7L27 1l-3 6 3 6z" fill="#f00" />
    </svg>
    <svg viewBox="0 0 40 160" className="pointer-events-none absolute top-[427px] left-[1345px] h-40 w-10" aria-hidden="true">
      <path d="M9 2l19 140" stroke="#f00" strokeWidth="2.500" />
      <path d="M31 158l-9-25 5 3 7-4z" fill="#f00" />
    </svg>
  </>
)

const App: React.FC = () => {
  return (
    <div className="relative flex h-screen flex-col overflow-hidden bg-[#262626] font-['Noto_Sans_CJK_SC',sans-serif] select-none">
      <TopBar />
      <div className="flex min-h-0 flex-1">
        <Toolbar />
        <main className="mr-[2px] ml-[3px] flex min-w-0 flex-1 flex-col">
          <div className="flex h-5 shrink-0 border-b border-[#262626] bg-[#2e2e2e]">
            <button className="flex items-center border-r border-[#262626] bg-[#323232] pr-[10px] pb-[2px] pl-[9px] text-[12px] leading-4 font-bold text-white">
              无标题-3*
              <Icon box="0 0 7 7" className="mt-[2px] ml-[7px] h-[7px] w-[7px] text-[#b0b0b0]"><path d="M.5.500l6 6M6.500.5l-6 6" {...stroke} /></Icon>
            </button>
          </div>
          <SceneBar />
          <CanvasArea />
          <Timeline />
        </main>
        <Properties />
      </div>
      <footer className="h-1 shrink-0 border-t border-[#222] bg-[#1f2f42]" />
      <MiniPanel />
      <ColorPopup />
      <Arrows />
      <TagBanner />
      <InputMethodBar />
      <SiteMark />
    </div>
  )
}

export default App
